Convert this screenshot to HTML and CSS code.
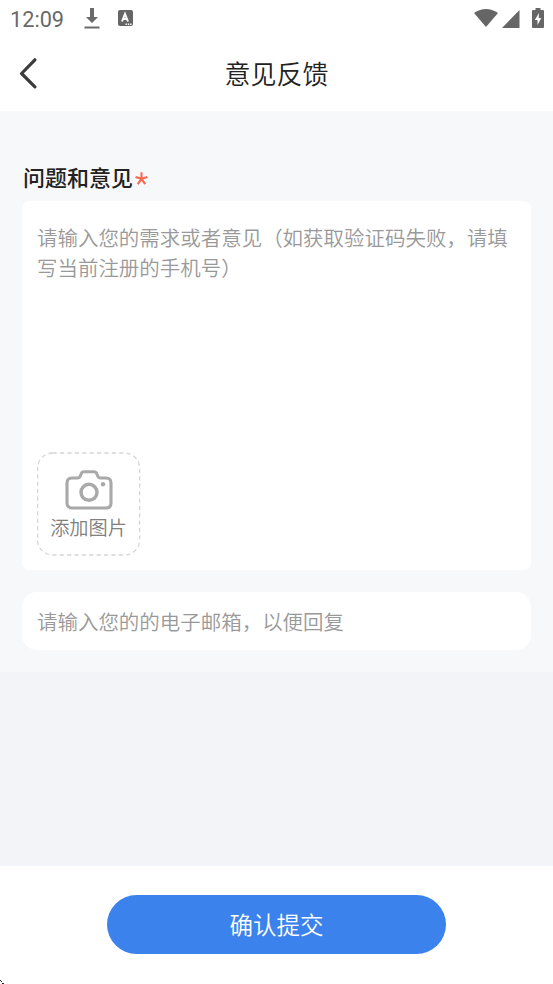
FILE: index.html
```html
<!DOCTYPE html>
<html lang="zh-CN">
<head>
<meta charset="utf-8">
<meta name="viewport" content="width=device-width, initial-scale=1">
<title>意见反馈</title>
<link rel="stylesheet" href="styles.css">
</head>
<body>
<div class="screen">
  <div class="status">
    <span class="clock">12:09</span>
    <svg class="download" width="16" height="21" viewBox="0 0 16 21" fill="#6a6a6a"><path d="M6 0h4v9h4l-6 6-6-6h4zM.5 18.4h15v2H.5z"/></svg>
    <svg class="keyboard" width="15" height="16" viewBox="0 0 15 16"><rect width="15" height="16" rx="2" fill="#666"/><path d="M4 11.5 7 3.8l3 7.7M5.1 9h3.8" fill="none" stroke="#fff" stroke-width="1.9"/><path d="M7.5 13.6h1.4v1.3H7.5zm2.3 0h1.4v1.3H9.8zm2.3 0h1.4v1.3h-1.4z" fill="#fff"/></svg>
    <span class="spacer"></span>
    <svg class="wifi" width="24" height="18" viewBox="0 0 24 18" fill="#666"><path d="M0 4Q12-4 24 4L12 18z"/></svg>
    <svg class="signal" width="18" height="18" viewBox="0 0 18 18" fill="#666"><path d="M17.5 0v18H0z"/></svg>
    <svg class="battery" width="12" height="20" viewBox="0 0 12 20"><path d="M3.5 0h5v2H11q1 0 1 1v16q0 1-1 1H1q-1 0-1-1V3q0-1 1-1h2.500z" fill="#666"/><path d="M7 5 2.800 12H5.500v5L9.300 10H6.700z" fill="#fff"/></svg>
  </div>
  <header class="header">
    <svg class="back" width="18" height="32" viewBox="0 0 18 32" fill="none" stroke="#3b3b3b" stroke-width="3.200" stroke-linecap="round" stroke-linejoin="round"><path d="M15.900 2.800 2.600 16.500l13.300 13.300"/></svg>
    <h1 class="title">意见反馈</h1>
  </header>
  <main class="form">
    <div class="label">问题和意见<svg class="required" width="13" height="13" viewBox="0 0 13 13" stroke="#f96650" stroke-width="2.100"><path d="M6.500 6.800V.3M6.500 6.800.6 4.900M6.500 6.800l5.900-1.900M6.500 6.800l-3.700 5.300M6.500 6.800l3.700 5.300"/></svg></div>
    <section class="message">
      <p class="hint">请输入您的需求或者意见（如获取验证码失败，请填写当前注册的手机号）</p>
      <div class="upload">
        <svg class="dash" width="104" height="104" viewBox="0 0 104 104" fill="none"><rect x=".6" y="1" width="102" height="102" rx="15" stroke="#d5d5d5" stroke-width="1.300" stroke-dasharray="4.200 3.200"/></svg>
        <svg class="camera" width="48" height="40" viewBox="0 0 48 40" fill="none" stroke="#a9a9a9" stroke-width="3.100"><path d="M7 8h5.500q2 0 2.800-2l.8-2q.8-2.200 3-2.200h9.800q2.200 0 3 2.200l.8 2q.8 2 2.800 2H41q5 0 5 5v20q0 5-5 5H7q-5 0-5-5V13q0-5 5-5z"/><circle cx="24" cy="22.300" r="8" stroke-width="3.500"/><circle cx="38" cy="14.200" r="2.200" fill="#a9a9a9" stroke="none"/></svg>
        <span class="upload-text">添加图片</span>
      </div>
    </section>
    <section class="email">请输入您的的电子邮箱，以便回复</section>
  </main>
  <div class="filler"></div>
  <footer class="footer">
    <button class="submit">确认提交</button>
    <svg class="corner" width="4" height="4" viewBox="0 0 4 4"><path d="M0 0h1v1H0zM1 1h1v1H1zM2 3h2v1H2z" fill="#222"/></svg>
  </footer>
</div>
</body>
</html>
```
FILE: styles.css
```css
* { box-sizing: border-box; }
body {
  margin: 0;
  font-family: "Noto Sans CJK SC", sans-serif;
  color: #222;
}
.screen {
  width: 553px;
  height: 984px;
  display: flex;
  flex-direction: column;
  overflow: hidden;
  background: #fff;
}
svg { display: block; flex: none; }
.status {
  height: 38px;
  display: flex;
  align-items: flex-start;
  padding: 0 9.500px 0 10px;
}
.clock {
  width: 74px;
  padding-top: 7px;
  font: 21.700px/25px Roboto, sans-serif;
  color: #696969;
}
.download { margin-top: 8px; }
.keyboard { margin: 10px 0 0 18px; }
.spacer { flex: 1; }
.wifi { margin-top: 9px; }
.signal { margin: 10px 0 0 4px; }
.battery { margin: 8px 0 0 12px; }
.header {
  height: 73px;
  display: grid;
  grid-template-columns: 60px 1fr 60px;
  align-items: center;
  padding-bottom: 3px;
}
.back { margin-left: 19px; }
.title {
  margin: 0;
  font-size: 26px;
  line-height: 38px;
  font-weight: 350;
  text-align: center;
}
.form {
  height: 561px;
  padding: 47px 22px 0;
  background: #f7f8fa;
}
.filler {
  height: 194px;
  background: #f2f4f8;
}
.label {
  height: 43px;
  display: flex;
  align-items: flex-start;
  padding-left: 1px;
  font-size: 22px;
  line-height: 36px;
  font-weight: 500;
}
.required { margin: 14px 0 0 2px; }
.message {
  height: 369px;
  display: flex;
  flex-direction: column;
  justify-content: space-between;
  padding: 21px 15px 14px;
  border-radius: 7px;
  background: #fff;
}
.hint {
  margin: 0;
  font-size: 20.480px;
  font-weight: 350;
  line-height: 30px;
  color: #999;
}
.upload {
  position: relative;
  width: 103px;
  height: 104px;
  display: flex;
  flex-direction: column;
  align-items: center;
  padding-top: 18px;
}
.dash { position: absolute; inset: 0; }
.upload-text {
  margin-top: 3px;
  font-size: 19.200px;
  font-weight: 350;
  line-height: 28px;
  color: #808080;
}
.email {
  height: 58px;
  margin-top: 22px;
  padding-left: 15px;
  border-radius: 15px;
  background: #fff;
  font-size: 20.480px;
  font-weight: 350;
  line-height: 58px;
  color: #999;
}
.footer {
  position: relative;
  height: 118px;
  display: flex;
  justify-content: center;
  align-items: flex-start;
  padding-top: 29px;
}
.submit {
  width: 339px;
  height: 59px;
  padding: 0;
  border: 0;
  border-radius: 30px;
  background: #3c82ec;
  color: #fff;
  font: 350 23.500px/59px "Noto Sans CJK SC", sans-serif;
}
.corner { position: absolute; left: 0; bottom: 0; }
```
